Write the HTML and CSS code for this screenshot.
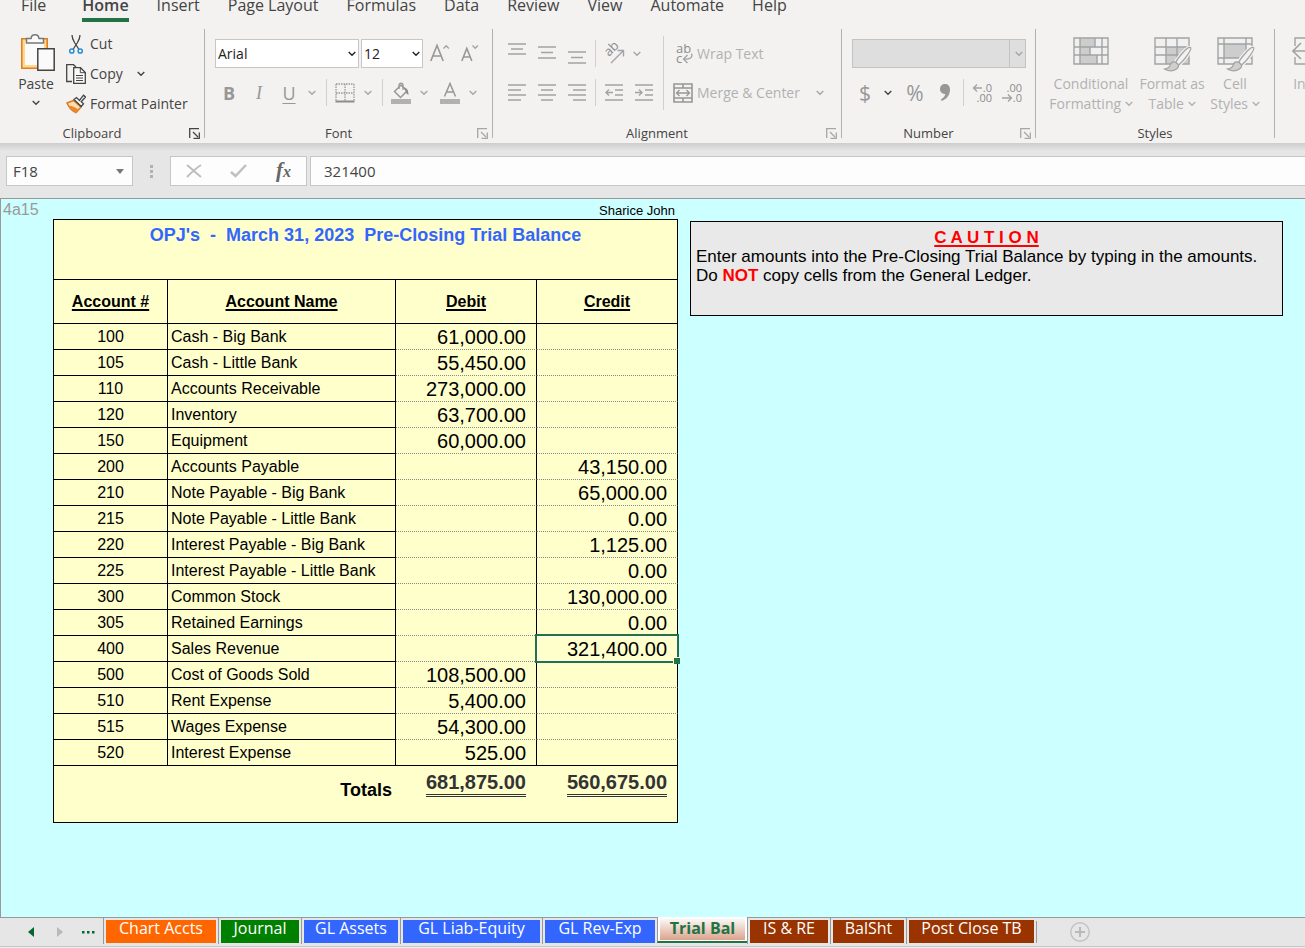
FILE: index.html
```html
<!DOCTYPE html>
<html lang="en">
<head>
<meta charset="utf-8">
<title>Trial Balance</title>
<link rel="stylesheet" href="styles.css">
</head>
<body>
<svg class="defs" aria-hidden="true">
  <symbol id="chev" viewBox="0 0 8 6"><path d="M.7 1 4 4.3 7.3 1" fill="none" stroke="currentColor" stroke-width="1.4"/></symbol>
  <symbol id="launch" viewBox="0 0 11 11"><path d="M.7 10V.7H10M4 4l5 5M10.3 4.5v5.8H4.5" fill="none" stroke="currentColor" stroke-width="1.3"/></symbol>
  <symbol id="brush" viewBox="0 0 30 26"><path d="M28.5 1.2c-1.800-.8-5.500 2.600-8 5.300-3 3.300-6.500 8-7.300 10l2.800 2.600c2.500-1.700 6-5.700 8.300-8.800 2.400-3.200 5.200-7.800 4.200-9.100Z" fill="#f3f2f1" stroke="#f3f2f1" stroke-width="4"/><path d="M28.500 1.200c-1.800-.8-5.500 2.600-8 5.300-3 3.300-6.500 8-7.300 10l2.800 2.600c2.500-1.700 6-5.700 8.300-8.800 2.400-3.200 5.200-7.800 4.200-9.100Z" fill="#f3f2f1" stroke="#a3a3a3" stroke-width="1.300"/><path d="M13.200 16.300c-2.700-.7-5 .3-5.700 2.800-.7 2.500-2.200 4-6 4.300 3.200 2.200 8.800 2.400 12 .300 2.300-1.500 3-3.200 2.500-4.600Z" fill="#cfcfcf" stroke="#a3a3a3" stroke-width="1.300"/></symbol>
</svg>

<nav class="menu" role="tablist" aria-label="Ribbon tabs">
  <button class="menu-tab first" role="tab">File</button>
  <button class="menu-tab active" role="tab" aria-selected="true">Home</button>
  <button class="menu-tab" role="tab">Insert</button>
  <button class="menu-tab" role="tab">Page Layout</button>
  <button class="menu-tab" role="tab">Formulas</button>
  <button class="menu-tab" role="tab">Data</button>
  <button class="menu-tab" role="tab">Review</button>
  <button class="menu-tab" role="tab">View</button>
  <button class="menu-tab" role="tab">Automate</button>
  <button class="menu-tab" role="tab">Help</button>
</nav>

<section class="ribbon" aria-label="Home ribbon">
  <div class="group clipboard">
    <div class="group-body">
      <button class="big paste">
        <svg width="40" height="40" viewBox="-4 0 40 40"><path d="M1.800 6.800H27.200V36.200H1.800Z" fill="#ffd98a" stroke="#e08026" stroke-width="1.600"/><path d="M5 9H24V33H5Z" fill="#fafafa"/><path d="M6.500 11V6.500h4.500c.5-5 7.500-5 8 0h4.500V11Z" fill="#fafafa" stroke="#777" stroke-width="1.500"/><path d="M17.800 16.800h16.400v21.400H17.800Z" fill="#fafafa" stroke="#444" stroke-width="1.500"/></svg>
        <span>Paste</span>
        <svg class="chev" width="8" height="6"><use href="#chev"/></svg>
      </button>
      <div class="clip-list">
        <button class="item"><svg width="20" height="20" viewBox="0 0 20 20"><path d="M6 1c0 3 1 5 2.500 7.500L13 15.500M14 1c0 3-1 5-2.500 7.500L7 15.500" fill="none" stroke="#444" stroke-width="1.300"/><circle cx="5.800" cy="17" r="2.100" fill="none" stroke="#2a8dd4" stroke-width="1.500"/><circle cx="14.200" cy="17" r="2.100" fill="none" stroke="#2a8dd4" stroke-width="1.500"/></svg>Cut</button>
        <div class="split"><button class="item"><svg width="20" height="20" viewBox="0 0 20 20"><path d="M6 17.500H.7V.7h6.800L10 3" fill="none" stroke="#444" stroke-width="1.300"/><path d="M7.700 3.700h6.800l4.800 4.800v10.800H7.700Z" fill="#fafafa" stroke="#444" stroke-width="1.300"/><path d="M14.300 3.700v5h5M10 11.500h7M10 14h7M10 16.500h7" fill="none" stroke="#444"/></svg>Copy</button><button class="drop dark" aria-label="Copy options"><svg width="8" height="6"><use href="#chev"/></svg></button></div>
        <button class="item"><svg width="20" height="20" viewBox="0 0 20 20"><path d="M7.500 6.500 1 9c2 4.500 5 8 9 9.500l5-5.500Z" fill="#fbdcae" stroke="#e07a1c" stroke-width="1.500"/><path d="M3 11.500c3 .5 6 1.500 9.500 4L10 18.500c-3-1.500-5.500-4-7-7Z" fill="#e8882e"/><path d="m8 5.500 2.500-2 3 3L17.500 1.200l2 1.800-4.300 4.800 2.300 2-2.300 2.700Z" fill="#fafafa" stroke="#444" stroke-width="1.300"/></svg>Format Painter</button>
      </div>
    </div>
    <div class="group-foot"><span>Clipboard</span><button class="launcher dark" aria-label="Clipboard settings"><svg width="11" height="11"><use href="#launch"/></svg></button></div>
  </div>
  <i class="rule"></i>

  <div class="group font">
    <div class="group-body rows">
      <div class="row">
        <span class="combo font-name"><select aria-label="Font"><option>Arial</option></select><svg width="8" height="6"><use href="#chev"/></svg></span>
        <span class="combo font-size"><select aria-label="Font size"><option>12</option></select><svg width="8" height="6"><use href="#chev"/></svg></span>
        <button class="tool" aria-label="Increase font size" disabled><svg width="20" height="22" viewBox="0 0 20 22"><path d="M.8 18 7 2.500 13.200 18M3 13h8" fill="none" stroke="#979797" stroke-width="1.600"/><path d="m13.500 5.500 2.700-2.700 2.700 2.700" fill="none" stroke="#a3a3a3" stroke-width="1.400"/></svg></button>
        <button class="tool" aria-label="Decrease font size" disabled><svg width="20" height="22" viewBox="0 0 20 22"><path d="m1.800 18 5-12.500 5 12.500M3.500 14h6.600" fill="none" stroke="#979797" stroke-width="1.600"/><path d="m12.500 2.500 2.700 2.700 2.700-2.700" fill="none" stroke="#a3a3a3" stroke-width="1.400"/></svg></button>
      </div>
      <div class="row">
        <button class="tool glyph bold" disabled>B</button><button class="tool glyph italic" disabled>I</button><button class="tool glyph under" disabled>U</button><button class="drop" aria-label="Underline options" disabled><svg width="8" height="6"><use href="#chev"/></svg></button>
        <i class="sep"></i>
        <button class="tool" aria-label="Borders" disabled><svg width="20" height="20" viewBox="0 0 20 20"><path d="M1 1h18M1 10h18M1 1v17M10 1v17M19 1v17" fill="none" stroke="#999" stroke-width="1.300" stroke-dasharray="1.500 1"/><path d="M.5 18.500h19" stroke="#8c8c8c" stroke-width="2"/></svg></button><button class="drop" aria-label="Border options" disabled><svg width="8" height="6"><use href="#chev"/></svg></button>
        <i class="sep"></i>
        <button class="tool" aria-label="Fill color" disabled><svg width="20" height="22" viewBox="0 0 20 22"><path d="M3.500 9.500 10 3l6 6-6.500 6.500Z" fill="none" stroke="#979797" stroke-width="1.500"/><path d="M8 7V3.500c0-3.300 4-3.300 4 0V8" fill="none" stroke="#979797" stroke-width="1.300"/><path d="M12.500 5.500c3 0 5 2 5 7.500-2-1-3.500-3-3-5Z" fill="#8c8c8c"/><path d="M0 17h20v5H0Z" fill="#b1b1b1"/></svg></button><button class="drop" aria-label="Fill options" disabled><svg width="8" height="6"><use href="#chev"/></svg></button>
        <button class="tool font-color" aria-label="Font color" disabled><svg width="20" height="22" viewBox="0 0 20 22"><path d="M4.500 14.500 10 1.500l5.500 13M6.500 10h7" fill="none" stroke="#979797" stroke-width="1.500"/><path d="M0 17h20v5H0Z" fill="#b1b1b1"/></svg></button><button class="drop" aria-label="Font color options" disabled><svg width="8" height="6"><use href="#chev"/></svg></button>
      </div>
    </div>
    <div class="group-foot"><span>Font</span><button class="launcher" aria-label="Font settings"><svg width="11" height="11"><use href="#launch"/></svg></button></div>
  </div>
  <i class="rule"></i>

  <div class="group alignment">
    <div class="group-body">
      <div class="rows">
        <div class="row">
          <button class="tool" aria-label="Top align" disabled><svg class="lines" width="18" height="24" viewBox="0 0 18 24"><path d="M0 2h18M3 7h12M0 12h18"/></svg></button><button class="tool" aria-label="Middle align" disabled><svg class="lines" width="18" height="24" viewBox="0 0 18 24"><path d="M0 5h18M3 10.500h12M0 16h18"/></svg></button><button class="tool" aria-label="Bottom align" disabled><svg class="lines" width="18" height="24" viewBox="0 0 18 24"><path d="M0 10h18M3 15.500h12M0 21h18"/></svg></button>
          <i class="sep tight"></i>
          <button class="tool" aria-label="Orientation" disabled><svg width="22" height="22" viewBox="0 0 22 22"><text x="6" y="14" transform="rotate(-45 6 14)" class="icon-text big-text">ab</text><path d="M8 20 20 8M14.500 7.500H20.500V13.500" fill="none" stroke="#a3a3a3" stroke-width="1.400"/></svg></button><button class="drop" aria-label="Orientation options" disabled><svg width="8" height="6"><use href="#chev"/></svg></button>
        </div>
        <div class="row">
          <button class="tool" aria-label="Align left" disabled><svg class="lines" width="18" height="18" viewBox="0 0 18 18"><path d="M0 1h18M0 6h13M0 11h18M0 16h13"/></svg></button><button class="tool" aria-label="Center" disabled><svg class="lines" width="18" height="18" viewBox="0 0 18 18"><path d="M0 1h18M3 6h12M0 11h18M3 16h12"/></svg></button><button class="tool" aria-label="Align right" disabled><svg class="lines" width="18" height="18" viewBox="0 0 18 18"><path d="M0 1h18M5 6h13M0 11h18M5 16h13"/></svg></button>
          <i class="sep tight"></i>
          <button class="tool" aria-label="Decrease indent" disabled><svg class="lines" width="18" height="18" viewBox="0 0 18 18"><path d="M0 1h18M10 6h8M10 11h8M0 16h18M8 8.500H1M4 5.500l-3 3 3 3"/></svg></button><button class="tool" aria-label="Increase indent" disabled><svg class="lines" width="18" height="18" viewBox="0 0 18 18"><path d="M0 1h18M10 6h8M10 11h8M0 16h18M0 8.500h7M4 5.500l3 3-3 3"/></svg></button>
        </div>
      </div>
      <i class="rule light"></i>
      <div class="rows">
        <div class="row"><button class="item" disabled><svg width="20" height="20" viewBox="0 0 20 20"><text x="3" y="9" class="icon-text big-text">ab</text><text x="3" y="19" class="icon-text big-text">c</text><path d="M18.500 9.500c1.500 4-1.500 6-7.500 5.500M14.500 11l-4 4 4 4" fill="none" stroke="#a3a3a3" stroke-width="1.300"/></svg>Wrap Text</button></div>
        <div class="row"><button class="item" disabled><svg width="20" height="20" viewBox="0 0 20 20"><path d="M1 1h18v18H1ZM1 5h18M1 15h18M10 1v4M10 15v4" fill="none" stroke="#979797" stroke-width="1.600"/><path d="M4 10h12M6.500 7 3.500 10l3 3M13.500 7l3 3-3 3" fill="none" stroke="#979797" stroke-width="1.300"/></svg>Merge &amp; Center</button><button class="drop merge-drop" aria-label="Merge options" disabled><svg width="8" height="6"><use href="#chev"/></svg></button></div>
      </div>
    </div>
    <div class="group-foot"><span>Alignment</span><button class="launcher" aria-label="Alignment settings"><svg width="11" height="11"><use href="#launch"/></svg></button></div>
  </div>
  <i class="rule"></i>

  <div class="group number">
    <div class="group-body rows">
      <div class="row"><span class="combo number-format"><select aria-label="Number format" disabled><option></option></select><svg width="8" height="6"><use href="#chev"/></svg></span></div>
      <div class="row">
        <button class="tool glyph sign" disabled>$</button><button class="drop dark currency" aria-label="Currency options"><svg width="8" height="6"><use href="#chev"/></svg></button><button class="tool glyph sign" disabled>%</button><button class="tool" aria-label="Comma style" disabled><svg width="10" height="17" viewBox="0 0 10 17"><path d="M5 0c3 0 5 2 5 5.500C10 11 6.500 15.500 1.500 17L1 15.300c2.500-1.300 4-3.200 4.300-5.400C2.300 10.300 0 8 0 5c0-3 2.200-5 5-5Z" fill="#979797"/></svg></button>
        <i class="sep tight"></i>
        <button class="tool" aria-label="Increase decimal" disabled><svg width="20" height="20" viewBox="0 0 20 20"><path d="M10 5H1.500M5 1.500 1.500 5 5 8.500" fill="none" stroke="#a3a3a3" stroke-width="1.400"/><text x="20" y="9" text-anchor="end" class="icon-text">.0</text><text x="20" y="19" text-anchor="end" class="icon-text">.00</text></svg></button><button class="tool" aria-label="Decrease decimal" disabled><svg width="20" height="20" viewBox="0 0 20 20"><path d="M0 15h9.500M6 11.500 9.500 15 6 18.500" fill="none" stroke="#a3a3a3" stroke-width="1.400"/><text x="20" y="9" text-anchor="end" class="icon-text">.00</text><text x="20" y="19" text-anchor="end" class="icon-text">.0</text></svg></button>
      </div>
    </div>
    <div class="group-foot"><span>Number</span><button class="launcher" aria-label="Number settings"><svg width="11" height="11"><use href="#launch"/></svg></button></div>
  </div>
  <i class="rule"></i>

  <div class="group styles">
    <div class="group-body">
      <button class="big w90" disabled><svg width="36" height="36" viewBox="0 0 36 36"><path d="M1 1h34v26H1Z" fill="#f0f0f0"/><path d="M7 1h15v9H7ZM7 10h10v8H7ZM7 18h17v9H7Z" fill="#cdcdcd"/><path d="M1 1h34v26H1ZM7 1v26M29 1v26M1 10h34M1 18h34M22 1v9M17 10v8M24 18v9" fill="none" stroke="#a3a3a3" stroke-width="1.400"/></svg><span>Conditional<br>Formatting <svg width="8" height="6"><use href="#chev"/></svg></span></button>
      <button class="big w72" disabled><svg width="40" height="36" viewBox="-2 0 40 36"><path d="M1 1h34v26H1Z" fill="#f0f0f0"/><path d="M12 10h23v17H12Z" fill="#cdcdcd"/><path d="M1 1h34v26H1ZM12 1v26M23 1v26M1 10h34M1 18h34" fill="none" stroke="#a3a3a3" stroke-width="1.400"/><use href="#brush" x="9" y="9" width="29" height="26"/></svg><span>Format as<br>Table <svg width="8" height="6"><use href="#chev"/></svg></span></button>
      <button class="big w54" disabled><svg width="40" height="36" viewBox="-2 0 40 36"><path d="M1 1h34v26H1Z" fill="#f0f0f0"/><path d="M7 7h22v14H7Z" fill="#cdcdcd"/><path d="M1 1h34v26H1ZM7 1v26M29 1v26M1 7h34M1 21h34" fill="none" stroke="#a3a3a3" stroke-width="1.400"/><use href="#brush" x="9" y="9" width="29" height="26"/></svg><span>Cell<br>Styles <svg width="8" height="6"><use href="#chev"/></svg></span></button>
    </div>
    <div class="group-foot"><span>Styles</span></div>
  </div>
  <i class="rule"></i>

  <div class="group cells">
    <div class="group-body">
      <button class="big w54" disabled><svg width="40" height="36" viewBox="0 0 40 36"><path d="M3 9V1h34v8M3 20v7h34v-7M14 1v8M14 20v7" fill="none" stroke="#a3a3a3" stroke-width="1.400"/><path d="M14 9h24v10H14Z" fill="#cdcdcd" stroke="#a3a3a3"/><path d="M14 14H1M9 6l-8 8 8 8" fill="none" stroke="#a3a3a3" stroke-width="1.600"/></svg><span>Insert</span></button>
    </div>
  </div>
</section>

<section class="formula" aria-label="Formula bar">
  <div class="name-box"><input aria-label="Name box" value="F18"><svg width="8" height="5" viewBox="0 0 8 5"><path d="M0 0h8L4 5Z" fill="#777"/></svg></div>
  <svg class="grip" width="3" height="13" viewBox="0 0 3 13"><path d="M0 0h3v3H0ZM0 5h3v3H0ZM0 10h3v3H0Z" fill="#b1b1b1"/></svg>
  <div class="formula-actions">
    <button aria-label="Cancel"><svg width="16" height="14" viewBox="0 0 16 14"><path d="M1 1c5 4 9 8 14 12M15 1C10 4 5 9 1 13" fill="none" stroke="#bdbdbd" stroke-width="2"/></svg></button>
    <button aria-label="Enter"><svg width="17" height="14" viewBox="0 0 17 14"><path d="m1 8 4.500 4L16 1" fill="none" stroke="#c0c0c0" stroke-width="2.500"/></svg></button>
    <button class="fx" aria-label="Insert function"><span>f</span><span class="fx-x">x</span></button>
  </div>
  <input class="formula-input" aria-label="Formula" value="321400">
</section>

<main class="sheet">
  <div class="code">4a15</div>
  <div class="owner">Sharice John</div>
  <table class="trial">
    <colgroup><col class="c-num"><col class="c-name"><col class="c-amt"><col class="c-amt"></colgroup>
    <thead>
      <tr class="title"><th colspan="4">OPJ's&nbsp; -&nbsp; March 31, 2023&nbsp; Pre-Closing Trial Balance</th></tr>
      <tr class="heads"><th>Account #</th><th>Account Name</th><th>Debit</th><th>Credit</th></tr>
    </thead>
    <tbody>
      <tr><td>100</td><td>Cash - Big Bank</td><td>61,000.00</td><td></td></tr>
      <tr><td>105</td><td>Cash - Little Bank</td><td>55,450.00</td><td></td></tr>
      <tr><td>110</td><td>Accounts Receivable</td><td>273,000.00</td><td></td></tr>
      <tr><td>120</td><td>Inventory</td><td>63,700.00</td><td></td></tr>
      <tr><td>150</td><td>Equipment</td><td>60,000.00</td><td></td></tr>
      <tr><td>200</td><td>Accounts Payable</td><td></td><td>43,150.00</td></tr>
      <tr><td>210</td><td>Note Payable - Big Bank</td><td></td><td>65,000.00</td></tr>
      <tr><td>215</td><td>Note Payable - Little Bank</td><td></td><td>0.00</td></tr>
      <tr><td>220</td><td>Interest Payable - Big Bank</td><td></td><td>1,125.00</td></tr>
      <tr><td>225</td><td>Interest Payable - Little Bank</td><td></td><td>0.00</td></tr>
      <tr><td>300</td><td>Common Stock</td><td></td><td>130,000.00</td></tr>
      <tr><td>305</td><td>Retained Earnings</td><td></td><td>0.00</td></tr>
      <tr><td>400</td><td>Sales Revenue</td><td></td><td class="selected">321,400.00</td></tr>
      <tr><td>500</td><td>Cost of Goods Sold</td><td>108,500.00</td><td></td></tr>
      <tr><td>510</td><td>Rent Expense</td><td>5,400.00</td><td></td></tr>
      <tr><td>515</td><td>Wages Expense</td><td>54,300.00</td><td></td></tr>
      <tr><td>520</td><td>Interest Expense</td><td>525.00</td><td></td></tr>
    </tbody>
    <tfoot>
      <tr><th colspan="2">Totals</th><td><span>681,875.00</span></td><td><span>560,675.00</span></td></tr>
    </tfoot>
  </table>
  <aside class="caution">
    <h2>C A U T I O N</h2>
    <p>Enter amounts into the Pre-Closing Trial Balance by typing in the amounts.</p>
    <p>Do <strong>NOT</strong> copy cells from the General Ledger.</p>
  </aside>
</main>

<nav class="sheets" aria-label="Sheets">
  <button class="nav-arrow" aria-label="Previous sheets"><svg width="6" height="10" viewBox="0 0 6 10"><path d="M6 0v10L0 5Z" fill="#006633"/></svg></button>
  <button class="nav-arrow" aria-label="Next sheets"><svg width="6" height="10" viewBox="0 0 6 10"><path d="M0 0v10l6-5Z" fill="#b9b9b9"/></svg></button>
  <button class="nav-arrow" aria-label="More sheets"><svg width="13" height="3" viewBox="0 0 13 3"><path d="M0 0h2.500v2.500H0ZM5 0h2.500v2.500H5ZM10 0h2.500v2.500H10Z" fill="#006633"/></svg></button>
  <button class="tab orange t115"><span>Chart Accts</span></button>
  <button class="tab green t83"><span>Journal</span></button>
  <button class="tab blue t99"><span>GL Assets</span></button>
  <button class="tab blue t142"><span>GL Liab-Equity</span></button>
  <button class="tab blue t115"><span>GL Rev-Exp</span></button>
  <button class="tab current t90" aria-current="page"><span>Trial Bal</span></button>
  <button class="tab brown t83"><span>IS &amp; RE</span></button>
  <button class="tab brown t76"><span>BalSht</span></button>
  <button class="tab brown t130"><span>Post Close TB</span></button>
  <i class="tab-end"></i>
  <button class="add" aria-label="New sheet"><svg width="20" height="20" viewBox="0 0 20 20"><circle cx="10" cy="10" r="9.200" fill="none" stroke="#c3c3c3" stroke-width="1.500"/><path d="M10 5v10M5 10h10" stroke="#b9b9b9" stroke-width="2"/></svg></button>
</nav>
</body>
</html>
```

FILE: styles.css
```css
* { box-sizing: border-box; }

html, body { height: 100%; }

body {
  margin: 0;
  display: flex;
  flex-direction: column;
  min-height: 100vh;
  overflow: hidden;
  background: #e6e6e6;
  color: #444;
  font: 14px/20px "Open Sans", "Noto Sans", sans-serif;
}

button, input, select {
  margin: 0;
  padding: 0;
  border: 0;
  border-radius: 0;
  background: none;
  color: inherit;
  font: inherit;
}

svg { flex: none; }
.defs { position: absolute; width: 0; height: 0; }

/* Ribbon tabs */
.menu {
  display: flex;
  flex: none;
  align-items: flex-end;
  gap: 28px;
  height: 22px;
  padding-left: 21px;
  background: #f3f2f1;
}
.menu-tab {
  flex: none;
  padding-bottom: 2px;
  border-bottom: 4px solid transparent;
  font-size: 16px;
  line-height: 22px;
  white-space: nowrap;
}
.menu-tab.first { margin-right: 8px; }
.menu-tab.active { border-color: #217346; font-weight: 600; }

/* Ribbon */
.ribbon {
  display: flex;
  flex: none;
  align-items: flex-start;
  padding-top: 7px;
  overflow: hidden;
  background: #f3f2f1;
}
.rule { flex: none; width: 1px; height: 109px; background: #b1b1b1; }
.rule.light { height: 74px; margin: 7px 9px 0 4px; background: #d0d0d0; }
.group { display: flex; flex: none; flex-direction: column; height: 114px; }
.group-body { display: flex; height: 95px; }
.group-foot { display: flex; align-items: center; height: 18px; font-size: 13px; line-height: 18px; text-align: center; }
.group-foot span { flex: 1; }
.launcher { display: flex; width: 20px; padding-left: 5px; color: #a6a6a6; }
.launcher.dark { color: #444; }
.clipboard { width: 204px; }
.font { width: 287px; }
.alignment { width: 348px; }
.number { width: 193px; }
.styles { width: 238px; }
.font .group-body { padding-left: 9px; }
.alignment .group-body { padding-left: 9px; }
.number .group-body { padding-left: 8px; }
.styles .group-body { padding-left: 10px; }
.cells .group-body { padding-left: 10px; }

.rows, .group-body.rows { display: flex; flex-direction: column; gap: 10px; padding-top: 10px; }
.row { display: flex; flex: none; align-items: center; height: 29px; }

.big {
  display: flex;
  flex-direction: column;
  align-items: center;
  padding-top: 8px;
}
.big > span { margin-top: 1px; text-align: center; white-space: nowrap; }
.big:disabled, .item:disabled { color: #b1b1b1; }
.w90 { width: 90px; }
.w72 { width: 72px; }
.w54 { width: 54px; }
.big span svg { margin-bottom: 2px; }
.paste { width: 42px; margin: 0 9px 0 15px; padding-top: 3px; }
.paste > span { margin-top: 2px; }
.paste .chev { margin-top: 6px; }

.clip-list { display: flex; flex-direction: column; }
.item { display: flex; align-items: center; gap: 4px; height: 30px; white-space: nowrap; }
.split { display: flex; }
.split .drop { margin-left: 10px; }

.tool { display: flex; flex: none; align-items: center; justify-content: center; width: 30px; height: 29px; }
.drop { display: flex; flex: none; align-items: center; justify-content: center; width: 16px; height: 29px; color: #a6a6a6; }
.drop.dark { color: #444; }
.currency { margin-right: 4px; }
.font-color { margin-left: 3px; }
.merge-drop { margin-left: 12px; }
.sep { width: 1px; height: 27px; margin: 0 3px 0 6px; background: #d0d0d0; }
.sep.tight { margin-left: 3px; }
.glyph { color: #979797; font-size: 18px; line-height: 24px; }
.bold { font-weight: 700; }
.italic { font-family: "Liberation Serif", serif; font-style: italic; }
.under { text-decoration: underline; text-underline-offset: 3px; }
.sign { font-size: 21px; }
.lines { fill: none; stroke: #a3a3a3; stroke-width: 1.4; }
.icon-text { fill: #8c8c8c; font-size: 11px; }
.big-text { font-size: 13px; }

.combo { position: relative; flex: none; height: 29px; }
.combo select {
  width: 100%;
  height: 100%;
  padding-left: 2px;
  border: 1px solid #c6c6c6;
  background: #fff;
  color: #222;
  appearance: none;
}
.combo svg { position: absolute; right: 3px; top: 12px; color: #222; }
.font-name { width: 144px; margin: 0 2px 0 1px; }
.font-size { width: 62px; margin-right: 2px; }
.number-format { width: 174px; margin-left: 2px; }
.number-format select {
  border-color: #c3c3c3;
  background: linear-gradient(to left, #dedede 15px, #c3c3c3 15px, #c3c3c3 16px, #dedede 16px);
  opacity: 1;
}
.number-format svg { color: #a6a6a6; }

/* Formula bar */
.formula {
  display: flex;
  flex: none;
  align-items: center;
  height: 55px;
  padding: 1px 0 0 6px;
  background: linear-gradient(#cdcdcd, #e6e6e6 8px);
  font-size: 15px;
}
.name-box, .formula-actions, .formula-input { height: 30px; border: 1px solid #c6c6c6; background: #fdfdfd; }
.name-box { display: flex; align-items: center; width: 127px; padding: 0 8px 0 6px; }
.name-box input { flex: 1; min-width: 0; }
.grip { margin: 0 17px 0 17px; }
.formula-actions { display: flex; align-items: center; width: 137px; margin-right: 3px; }
.formula-actions button { display: flex; align-items: center; justify-content: center; width: 45px; height: 28px; }
.formula .fx { align-items: baseline; font: italic bold 21px/26px "Liberation Serif", serif; color: #666; }
.formula .fx-x { font-size: 16px; }
.formula-input { flex: 1; min-width: 0; padding-left: 13px; border-right: 0; }

/* Worksheet */
.sheet {
  display: grid;
  flex: 1;
  grid-template-columns: 52px 625px minmax(0, 1fr);
  grid-template-rows: 20px auto;
  align-content: start;
  min-height: 0;
  border-top: 1px solid #999;
  border-left: 1px solid #999;
  background: #cff;
  color: #000;
  font: 16px/19px "Liberation Sans", Arial, sans-serif;
}
.code { padding-left: 2px; color: #999; line-height: 22px; }
.owner { padding: 2px 3px 0 0; font-size: 13px; line-height: 19px; text-align: right; }

.trial {
  grid-column: 2;
  width: 625px;
  border: solid #000;
  border-width: 1px 0 0 1px;
  border-spacing: 0;
  table-layout: fixed;
  background: #ffc;
}
.c-num { width: 114px; }
.c-name { width: 228px; }
.c-amt { width: 141px; }
.trial th, .trial td { padding: 0; border: solid #000; border-width: 0 1px 1px 0; }
.title th { height: 60px; padding-top: 5px; color: #36f; font-size: 18px; line-height: 20px; vertical-align: top; }
.heads th { height: 44px; text-decoration: underline 2px; text-underline-offset: 2px; }
.trial tbody td { height: 26px; line-height: 24px; }
.trial tbody td:nth-child(1) { padding-top: 3px; line-height: 20px; vertical-align: top; text-align: center; }
.trial tbody td:nth-child(2) { padding-left: 3px; }
.trial tbody td:nth-child(n+3) { padding-right: 10px; border-bottom: 1px dotted #888; font-size: 20px; text-align: right; }
.trial tbody tr:last-child td:nth-child(n) { border-bottom: 1px solid #000; }
.trial .selected { position: relative; }
.selected::before {
  content: "";
  position: absolute;
  inset: -2px;
  border: 2px solid #217346;
  box-shadow: inset 0 0 0 1px #fff;
}
.selected::after {
  content: "";
  position: absolute;
  right: -3px;
  bottom: -3px;
  width: 6px;
  height: 6px;
  border: solid #ffc;
  border-width: 1px 0 0 1px;
  background: #217346;
}
.trial tfoot th, .trial tfoot td { height: 57px; border-right: 0; vertical-align: top; text-align: right; }
.trial tfoot th { padding: 14px 4px 0 0; font-size: 18px; line-height: 20px; }
.trial tfoot td { padding: 4px 11px 0 0; color: #333; font-size: 20px; font-weight: 700; line-height: 24px; }
.trial tfoot td:last-child { padding-right: 10px; border-right: 1px solid #000; }
.trial tfoot span { display: inline-block; border-bottom: 3px double #333; }

.caution {
  align-self: start;
  min-height: 95px;
  margin: 2px 22px 0 12px;
  padding: 6px 5px;
  border: 1px solid #000;
  background: #e9e9e9;
  font-size: 17px;
}
.caution h2, .caution p { margin: 0; }
.caution h2 { color: red; font-size: 17px; line-height: 19px; text-align: center; text-decoration: underline 2px; text-underline-offset: 2px; }
.caution strong { color: red; }

/* Sheet tabs */
.sheets {
  display: flex;
  flex: none;
  align-items: flex-start;
  height: 31px;
  padding-left: 16px;
  border-top: 1px solid #999;
  background: linear-gradient(#e6e6e6 28px, #c6c6c6 28px, #c6c6c6 29px, #f0f0f0 29px);
}
.nav-arrow { display: flex; align-items: center; justify-content: center; width: 29px; height: 28px; }
.tab {
  flex: none;
  height: 26px;
  padding: 2px 2px 1px;
  border-left: 1px solid #999;
  color: #fff;
  font-size: 16px;
  line-height: 16px;
  white-space: nowrap;
}
.tab span { display: block; height: 23px; }
.t76 { width: 76px; }
.t83 { width: 83px; }
.t90 { width: 90px; }
.t99 { width: 99px; }
.t115 { width: 115px; }
.t130 { width: 130px; }
.t142 { width: 142px; }
.orange span { background: #f60; }
.green span { background: #008000; }
.blue span { background: #36f; }
.brown span { background: #930; }
.current {
  margin-top: -1px;
  padding-top: 0;
  border-bottom: 2px solid #217346;
  background: #fff;
  color: #217346;
  font-weight: 700;
}
.current span { padding-top: 3px; background: linear-gradient(#fff, #dba38c); }
.tab-end { width: 1px; height: 22px; margin-top: 3px; background: #999; }
.add { display: flex; margin: 4px 0 0 33px; }
```
